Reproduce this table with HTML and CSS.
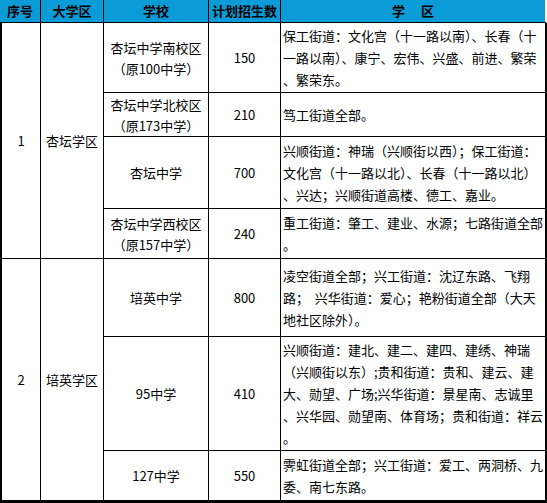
FILE: index.html
```html
<!DOCTYPE html>
<html lang="zh-CN">
<head>
<meta charset="utf-8">
<title>学区划分</title>
<link rel="stylesheet" href="styles.css">
</head>
<body>
<div class="grid">
  <div class="cell head c1">序号</div>
  <div class="cell head">大学区</div>
  <div class="cell head">学校</div>
  <div class="cell head">计划招生数</div>
  <div class="cell head c5">学<span class="gap"></span>区</div>

  <div class="cell c1 g1">1</div>
  <div class="cell g1">杏坛学区</div>
  <div class="cell school">杏坛中学南校区<br>（原100中学）</div>
  <div class="cell">150</div>
  <div class="cell c5 area">保工街道：文化宫（十一路以南）、长春（十<br>一路以南）、康宁、宏伟、兴盛、前进、繁荣<br>、繁荣东。</div>

  <div class="cell school">杏坛中学北校区<br>（原173中学）</div>
  <div class="cell">210</div>
  <div class="cell c5 area">笃工街道全部。</div>

  <div class="cell school">杏坛中学</div>
  <div class="cell">700</div>
  <div class="cell c5 area">兴顺街道：神瑞（兴顺街以西）；保工街道：<br>文化宫（十一路以北）、长春（十一路以北）<br>、兴达；兴顺街道高楼、德工、嘉业。</div>

  <div class="cell school">杏坛中学西校区<br>（原157中学）</div>
  <div class="cell">240</div>
  <div class="cell c5 area">重工街道：肇工、建业、水源；七路街道全部<br>。</div>

  <div class="cell c1 g2 last">2</div>
  <div class="cell g2 last">培英学区</div>
  <div class="cell school">培英中学</div>
  <div class="cell">800</div>
  <div class="cell c5 area">凌空街道全部；兴工街道：沈辽东路、飞翔<br>路；&nbsp;&nbsp;兴华街道：爱心；艳粉街道全部（大天<br>地社区除外）。</div>

  <div class="cell school">95中学</div>
  <div class="cell">410</div>
  <div class="cell c5 area">兴顺街道：建北、建二、建四、建绣、神瑞<br>（兴顺街以东）;贵和街道：贵和、建云、建<br>大、勋望、广场;兴华街道：景星南、志诚里<br>、兴华园、勋望南、体育场；贵和街道：祥云<br>。</div>

  <div class="cell school last">127中学</div>
  <div class="cell last">550</div>
  <div class="cell c5 area last">霁虹街道全部；兴工街道：爱工、两洞桥、九<br>委、南七东路。</div>
</div>
</body>
</html>
```
FILE: styles.css
```css
html, body {
  margin: 0;
  padding: 0;
  background: #ffffff;
}

.grid {
  display: grid;
  width: 547px;
  grid-template-columns: 41px 63px 105px 72px 266px;
  grid-template-rows: 23px 70px 44px 72px 50px 78px 114px 52px;
  font-family: "Noto Sans CJK SC", "Microsoft YaHei", sans-serif;
  font-size: 13px;
  color: #000;
}

.cell {
  box-sizing: border-box;
  border-right: 1px solid #000;
  border-bottom: 1px solid #000;
  display: flex;
  align-items: center;
  justify-content: center;
  text-align: center;
  line-height: 21px;
  white-space: nowrap;
  overflow: hidden;
}

.head {
  background: #0b9bd6;
  font-weight: bold;
  line-height: 22px;
}

.c1 {
  border-left: 2px solid #000;
}

.head.c1 {
  border-left: none;
}

.c5 {
  border-right: 2px solid #000;
}

.head.c5 {
  border-right: 2px solid #fff;
}

.gap {
  display: inline-block;
  width: 16px;
}

.g1 {
  grid-row: 2 / 6;
}

.g2 {
  grid-row: 6 / 9;
}

.c1.g1, .c1.g2 {
  grid-column: 1;
}

.g1:not(.c1), .g2:not(.c1) {
  grid-column: 2;
}

.school {
  grid-column: 3;
}

.area {
  justify-content: flex-start;
  text-align: left;
  line-height: 22px;
  padding-left: 2px;
}

.last {
  border-bottom: 3px solid #000;
}
```
